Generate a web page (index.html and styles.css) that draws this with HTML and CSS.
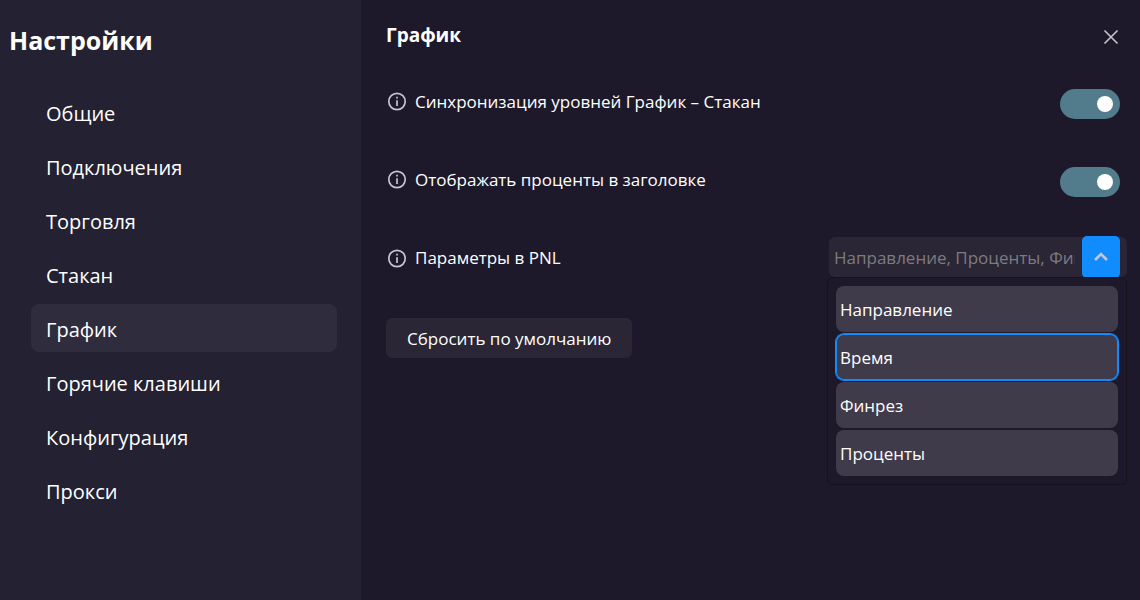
FILE: index.html
```html
<!DOCTYPE html>
<html lang="ru">
<head>
  <meta charset="utf-8">
  <meta name="viewport" content="width=device-width, initial-scale=1">
  <title>Настройки</title>
  <link rel="stylesheet" href="styles.css">
</head>
<body>
  <div class="settings">
    <aside class="sidebar">
      <h1>Настройки</h1>
      <nav class="menu">
        <a href="#general">Общие</a>
        <a href="#connections">Подключения</a>
        <a href="#trading">Торговля</a>
        <a href="#orderbook">Стакан</a>
        <a href="#chart" class="active">График</a>
        <a href="#hotkeys">Горячие клавиши</a>
        <a href="#config">Конфигурация</a>
        <a href="#proxy">Прокси</a>
      </nav>
    </aside>

    <main class="content">
      <header class="content-header">
        <h2>График</h2>
        <button type="button" class="close-btn" aria-label="Закрыть">
          <svg width="16" height="16" viewBox="0 0 16 16"><path d="M1.5 1.5 L14.5 14.5 M14.5 1.5 L1.5 14.5"/></svg>
        </button>
      </header>

      <div class="rows">
        <div class="row">
          <label class="row-label" for="sync">
            <svg class="info" width="20" height="20" viewBox="0 0 20 20"><circle cx="10" cy="9.5" r="8.2"/><path d="M10 8.2 V14 M10 4.8 V6.6"/></svg>
            Синхронизация уровней График – Стакан
          </label>
          <input type="checkbox" class="toggle" id="sync" checked>
        </div>
        <div class="row">
          <label class="row-label" for="percent">
            <svg class="info" width="20" height="20" viewBox="0 0 20 20"><circle cx="10" cy="9.5" r="8.2"/><path d="M10 8.2 V14 M10 4.8 V6.6"/></svg>
            Отображать проценты в заголовке
          </label>
          <input type="checkbox" class="toggle" id="percent" checked>
        </div>
        <div class="row">
          <label class="row-label" for="pnl">
            <svg class="info" width="20" height="20" viewBox="0 0 20 20"><circle cx="10" cy="10.5" r="8.2"/><path d="M10 9.2 V15 M10 5.8 V7.6"/></svg>
            Параметры в PNL
          </label>
          <div class="combo">
            <input type="text" id="pnl" value="Направление, Проценты, Финрез" readonly>
            <button type="button" class="combo-btn" aria-label="Свернуть список">
              <svg width="16" height="10" viewBox="0 0 16 10"><path d="M2 8 L8 2 L14 8"/></svg>
            </button>
            <div class="combo-list">
              <button type="button">Направление</button>
              <button type="button" class="focused">Время</button>
              <button type="button">Финрез</button>
              <button type="button">Проценты</button>
            </div>
          </div>
        </div>
      </div>

      <button type="button" class="reset-btn">Сбросить по умолчанию</button>
    </main>
  </div>
</body>
</html>
```
FILE: styles.css
```css
* {
  box-sizing: border-box;
}

body {
  margin: 0;
  font-family: "Open Sans", "Noto Sans", sans-serif;
  font-size: 17px;
  color: #fff;
  background-color: #1d192a;
}

button,
input {
  font: inherit;
  color: inherit;
  margin: 0;
}

button {
  border: none;
  cursor: pointer;
}

svg {
  display: block;
  fill: none;
}

.settings {
  display: flex;
  min-height: 100vh;
}

/* Sidebar */
.sidebar {
  flex: 0 0 361px;
  padding: 20px 24px 20px 0;
  background-color: #242132;
}

.sidebar h1 {
  margin: 0 0 28px 9px;
  font-size: 25px;
  line-height: 40px;
  font-weight: 700;
}

.menu {
  display: flex;
  flex-direction: column;
  gap: 6px;
  margin-left: 31px;
}

.menu a {
  padding: 4px 15px 0;
  border-radius: 8px;
  font-size: 20px;
  line-height: 44px;
  color: #fff;
  text-decoration: none;
}

.menu a.active {
  background-color: #2f2c3e;
}

/* Content */
.content {
  flex: 1;
  min-width: 0;
  padding: 21px 13px 20px 25px;
}

.content-header {
  display: flex;
  justify-content: space-between;
  align-items: flex-start;
  margin-bottom: 28px;
}

.content-header h2 {
  margin: 0;
  font-size: 19px;
  line-height: 28px;
  font-weight: 700;
}

.close-btn {
  padding: 8px;
  background: none;
}

.close-btn svg {
  stroke: #c6c5d0;
  stroke-width: 1.6;
}

.rows {
  display: flex;
  flex-direction: column;
  gap: 38px;
}

.row {
  display: flex;
  justify-content: space-between;
  align-items: flex-start;
  height: 40px;
}

.row-label {
  display: flex;
  align-items: center;
  gap: 8px;
  margin: 8px 0 0 1px;
  line-height: 26px;
}

.info {
  stroke: #c6c5d0;
  stroke-width: 1.7;
}

.toggle {
  appearance: none;
  width: 60px;
  height: 30px;
  margin: 8px 7px 0 0;
  padding: 7px;
  border-radius: 15px;
  background-color: #527b8b;
  cursor: pointer;
}

.toggle::before {
  content: "";
  display: block;
  width: 16px;
  height: 16px;
  border-radius: 50%;
  background-color: #fff;
}

.toggle:checked::before {
  margin-left: auto;
}

/* Multi select */
.combo {
  position: relative;
  display: flex;
  align-items: center;
  width: 298px;
  height: 40px;
  padding: 0 7px 0 5px;
  border-radius: 6px;
  background-color: #2a2635;
}

.combo input {
  flex: 1;
  min-width: 0;
  margin-right: 7px;
  padding: 0;
  border: none;
  outline: none;
  background: none;
  color: #7d7b80;
}

.combo-btn {
  display: flex;
  justify-content: center;
  align-items: center;
  width: 38px;
  height: 42px;
  border-radius: 5px;
  background-color: #118cff;
}

.combo-btn svg {
  stroke: #c6c5d0;
  stroke-width: 2.6;
}

.combo-list {
  position: absolute;
  top: 100%;
  left: -2px;
  right: 0;
  display: flex;
  flex-direction: column;
  gap: 2px;
  padding: 8px;
  border: 1px solid #15131b;
  border-radius: 6px;
  background-color: #1d192a;
}

.combo-list button {
  height: 46px;
  padding: 0 4px;
  border-radius: 8px;
  background-color: #403b4a;
  text-align: left;
}

.combo-list button.focused {
  box-shadow: 0 0 0 1px #118cff, inset 0 0 0 1px #118cff;
}

.reset-btn {
  height: 40px;
  margin-top: 41px;
  padding: 0 21px;
  border-radius: 6px;
  background-color: #2a2635;
}
```
